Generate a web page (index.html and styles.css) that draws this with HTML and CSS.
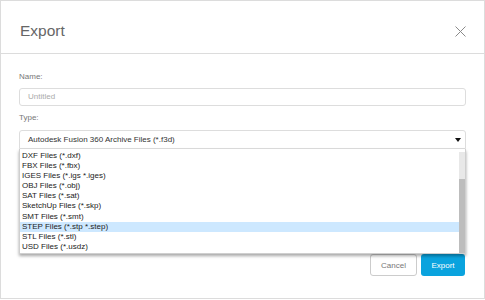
FILE: index.html
```html
<!DOCTYPE html>
<html lang="en">
<head>
    <meta charset="UTF-8">
    <meta name="viewport" content="width=device-width, initial-scale=1.0">
    <title>Export</title>
    <link rel="stylesheet" href="styles.css">
</head>
<body>

    <div class="dialog">
        <div class="dialog-header">
            <h1 class="dialog-title">Export</h1>
            <button class="close-button" aria-label="Close">
                <svg width="11" height="11" viewBox="0 0 11 11">
                    <path d="M0.5 0.5 L10.5 10.5 M10.5 0.5 L0.5 10.5" stroke="#8a8a8a" stroke-width="1" fill="none"/>
                </svg>
            </button>
        </div>

        <div class="dialog-body">
            <div class="field-label">Name:</div>
            <div class="text-input">Untitled</div>

            <div class="field-label type-label">Type:</div>
            <div class="select-wrap">
                <div class="select-box">
                    <span>Autodesk Fusion 360 Archive Files (*.f3d)</span>
                    <span class="select-arrow"></span>
                </div>
                <div class="dropdown">
                    <ul class="option-list">
                        <li>DXF Files (*.dxf)</li>
                        <li>FBX Files (*.fbx)</li>
                        <li>IGES Files (*.igs *.iges)</li>
                        <li>OBJ Files (*.obj)</li>
                        <li>SAT Files (*.sat)</li>
                        <li>SketchUp Files (*.skp)</li>
                        <li>SMT Files (*.smt)</li>
                        <li class="selected">STEP Files (*.stp *.step)</li>
                        <li>STL Files (*.stl)</li>
                        <li>USD Files (*.usdz)</li>
                    </ul>
                    <div class="scrollbar">
                        <div class="scroll-thumb"></div>
                    </div>
                </div>
            </div>

            <div class="dialog-footer">
                <button class="btn btn-cancel">Cancel</button>
                <button class="btn btn-export">Export</button>
            </div>
        </div>
    </div>

</body>
</html>
```

FILE: styles.css
```css
body {
    font-family: "Liberation Sans", Arial, sans-serif;
    background-color: #ffffff;
    margin: 0;
    padding: 0;
}

.dialog {
    width: 485px;
    height: 299px;
    box-sizing: border-box;
    border: 1px solid #dcdcdc;
    background-color: white;
}

.dialog-header {
    height: 44px;
    padding: 8px 18px 0 19px;
    display: flex;
    align-items: center;
    justify-content: space-between;
    border-bottom: 1px solid #dcdcdc;
}

.dialog-title {
    margin: 0;
    font-size: 15.5px;
    font-weight: normal;
    color: #666666;
}

.close-button {
    background: none;
    border: none;
    padding: 0;
    width: 11px;
    height: 11px;
    display: flex;
    cursor: pointer;
}

.dialog-body {
    padding: 17px 18px 0 18px;
}

.field-label {
    font-size: 8px;
    line-height: 12px;
    color: #777777;
    margin-bottom: 5px;
}

.type-label {
    margin-top: 6px;
    margin-bottom: 6px;
}

.text-input {
    height: 18px;
    box-sizing: border-box;
    border: 1px solid #dddddd;
    border-radius: 3px;
    padding: 0 8px;
    font-size: 8px;
    line-height: 16px;
    color: #aaaaaa;
}

.select-wrap {
    position: relative;
}

.select-box {
    height: 19px;
    box-sizing: border-box;
    border: 1px solid #dddddd;
    border-radius: 3px 3px 0 0;
    padding: 0 4px 0 8px;
    display: flex;
    align-items: center;
    justify-content: space-between;
    font-size: 8px;
    color: #333333;
}

.select-arrow {
    width: 0;
    height: 0;
    border-left: 3.5px solid transparent;
    border-right: 3.5px solid transparent;
    border-top: 4px solid #111111;
}

.dropdown {
    position: absolute;
    top: 19px;
    left: 0;
    width: 447px;
    height: 105px;
    box-sizing: border-box;
    border: 1px solid #cfcfcf;
    border-top: none;
    background-color: white;
    box-shadow: 0 2px 3px rgba(0, 0, 0, 0.35);
    display: flex;
    z-index: 2;
}

.option-list {
    flex: 1;
    list-style: none;
    margin: 0;
    padding: 2px 0 0 0;
}

.option-list li {
    height: 10.1px;
    line-height: 10.1px;
    padding-left: 2px;
    font-size: 8px;
    color: #222222;
}

.option-list li.selected {
    background-color: #cde8ff;
}

.scrollbar {
    width: 6px;
    margin-top: 3px;
    background-color: #e8e8e8;
    display: flex;
    flex-direction: column;
}

.scroll-thumb {
    margin-top: 27px;
    flex: 1;
    background-color: #bdbdbd;
}

.dialog-footer {
    display: flex;
    justify-content: flex-end;
    gap: 4px;
    margin-top: 105px;
    padding-right: 1px;
}

.btn {
    height: 22px;
    font-family: "Liberation Sans", Arial, sans-serif;
    font-size: 8px;
    border-radius: 3px;
    cursor: pointer;
}

.btn-cancel {
    width: 47px;
    background-color: white;
    border: 1px solid #cccccc;
    color: #777777;
}

.btn-export {
    width: 44px;
    background-color: #0aa3de;
    border: none;
    color: white;
}
```
